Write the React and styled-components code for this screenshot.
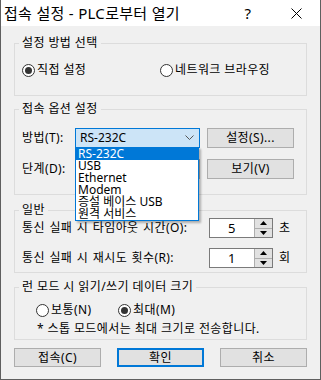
import React from "react";
import styled, { createGlobalStyle, css } from "styled-components";

const GlobalStyle = createGlobalStyle`
  html, body { margin: 0; padding: 0; background: #f0f0f0; }
  body {
    font-family: "Noto Sans", "Noto Sans CJK KR", sans-serif;
    font-size: 12px;
    letter-spacing: 0.4px;
    color: #000;
  }
  * { box-sizing: border-box; }
`;

const Window = styled.div`
  width: 321px;
  height: 380px;
  background: #f0f0f0;
  border: 1px solid #5f5f5f;
  border-top: none;
  display: flex;
  flex-direction: column;
`;

const TitleBar = styled.div`
  height: 26px;
  background: #fff;
  display: flex;
  align-items: center;
  padding-left: 3px;
  flex-shrink: 0;
`;

const TitleText = styled.div`
  flex: 1;
  font-size: 15px;
  line-height: 20px;
  letter-spacing: 0.3px;
  white-space: nowrap;
`;

const CaptionButton = styled.div`
  width: 48px;
  height: 26px;
  display: flex;
  align-items: center;
  justify-content: center;
  font-size: 15px;
  color: #000;
`;

const Body = styled.div`
  padding: 9px 13px 0 13px;
  display: flex;
  flex-direction: column;
`;

const Group = styled.fieldset`
  margin: ${(p) => p.$mt || 0}px 0 0 0;
  padding: 0;
  border: 1px solid #dcdcdc;
  min-width: 0;
`;

const Legend = styled.legend`
  margin-left: 4px;
  padding: 0 3px;
  font-size: 12px;
  line-height: 16px;
  height: 16px;
`;

const Content = styled.div`
  padding: ${(p) => p.$pad};
  display: flex;
  flex-direction: column;
  gap: ${(p) => p.$gap || 0}px;
`;

const RadioRow = styled.div`
  display: grid;
  grid-template-columns: ${(p) => p.$col}px auto;
  height: 16px;
  align-items: center;
`;

const RadioLabel = styled.label`
  display: flex;
  align-items: center;
  gap: 2px;
  line-height: 16px;
  white-space: nowrap;
`;

const RadioCircle = styled.span`
  width: 13px;
  height: 13px;
  border-radius: 50%;
  border: 1px solid #333;
  background: #fff;
  display: flex;
  align-items: center;
  justify-content: center;
  flex-shrink: 0;
  &::after {
    content: "";
    width: 7px;
    height: 7px;
    border-radius: 50%;
    background: ${(p) => (p.$checked ? "#333" : "transparent")};
  }
`;

const FieldRow = styled.div`
  display: flex;
  align-items: center;
  height: 20px;
`;

const FieldLabel = styled.div`
  width: ${(p) => p.$w}px;
  line-height: 16px;
  white-space: nowrap;
  word-spacing: 1px;
  flex-shrink: 0;
`;

const ComboWrap = styled.div`
  position: relative;
  width: 125px;
  height: 20px;
  margin-right: 7px;
  flex-shrink: 0;
`;

const Combo = styled.div`
  width: 100%;
  height: 100%;
  border: 1px solid ${(p) => (p.$focused ? "#0078d7" : "#adadad")};
  background: ${(p) => (p.$focused ? "#cce4f7" : "#e1e1e1")};
  display: flex;
  align-items: center;
  justify-content: space-between;
  padding: 0 5px 0 4px;
  font-size: 12px;
  line-height: 16px;
  letter-spacing: 0;
`;

const DropList = styled.ul`
  position: absolute;
  top: 19px;
  left: 0;
  width: 124px;
  margin: 0;
  padding: 0;
  list-style: none;
  background: #fff;
  border: 1px solid #0078d7;
  box-shadow: 2px 2px 2px rgba(0, 0, 0, 0.28);
  z-index: 5;
`;

const DropItem = styled.li`
  height: 12px;
  line-height: 12px;
  padding-left: 2px;
  font-size: 12px;
  letter-spacing: 0;
  white-space: nowrap;
  ${(p) =>
    p.$selected &&
    css`
      background: #0078d7;
      color: #fff;
    `}
`;

const Button = styled.button`
  width: 87px;
  height: ${(p) => p.$h || 20}px;
  padding: 0;
  margin: 0;
  font-family: inherit;
  font-size: 12px;
  letter-spacing: 0.4px;
  line-height: 16px;
  color: #000;
  background: #e1e1e1;
  border: ${(p) => (p.$primary ? "2px solid #0078d7" : "1px solid #adadad")};
  flex-shrink: 0;
`;

const Spin = styled.div`
  width: 64px;
  height: 20px;
  border: 1px solid #7a7a7a;
  background: #fff;
  display: flex;
  flex-shrink: 0;
`;

const SpinValue = styled.div`
  flex: 1;
  text-align: center;
  font-size: 13px;
  line-height: 18px;
`;

const SpinButtons = styled.div`
  width: 18px;
  display: flex;
  flex-direction: column;
  border-left: 1px solid #adadad;
`;

const SpinButton = styled.div`
  flex: 1;
  background: #e1e1e1;
  display: flex;
  align-items: center;
  justify-content: center;
  & + & { border-top: 1px solid #adadad; }
`;

const Unit = styled.div`
  margin-left: 6px;
  line-height: 16px;
`;

const Note = styled.div`
  margin-top: 3px;
  padding-left: 1px;
  line-height: 16px;
  white-space: nowrap;
`;

const Footer = styled.div`
  margin-top: 8px;
  display: flex;
  justify-content: space-between;
`;

const Chevron = () => (
  <svg width="9" height="6" viewBox="0 0 9 6">
    <polyline points="0.5,0.5 4.5,4.5 8.5,0.5" fill="none" stroke="#555" strokeWidth="1" />
  </svg>
);

const Arrow = ({ up }) => (
  <svg width="7" height="4" viewBox="0 0 7 4">
    <polygon points={up ? "3.5,0 7,4 0,4" : "0,0 7,0 3.5,4"} fill="#000" />
  </svg>
);

const CloseIcon = () => (
  <svg width="11" height="11" viewBox="0 0 11 11">
    <path d="M0.5 0.5 L10.5 10.5 M10.5 0.5 L0.5 10.5" stroke="#000" strokeWidth="1" />
  </svg>
);

const Radio = ({ checked, children }) => (
  <RadioLabel>
    <RadioCircle $checked={checked} />
    {children}
  </RadioLabel>
);

const SpinBox = ({ value }) => (
  <Spin>
    <SpinValue>{value}</SpinValue>
    <SpinButtons>
      <SpinButton><Arrow up /></SpinButton>
      <SpinButton><Arrow /></SpinButton>
    </SpinButtons>
  </Spin>
);

const methods = ["RS-232C", "USB", "Ethernet", "Modem", "증설 베이스 USB", "원격 서비스"];

export default function App() {
  return (
    <>
      <GlobalStyle />
      <Window>
        <TitleBar>
          <TitleText>접속 설정 - PLC로부터 열기</TitleText>
          <CaptionButton>?</CaptionButton>
          <CaptionButton><CloseIcon /></CaptionButton>
        </TitleBar>
        <Body>
          <Group>
            <Legend>설정 방법 선택</Legend>
            <Content $pad="11px 0 17px 7px">
              <RadioRow $col={138}>
                <Radio checked>직접 설정</Radio>
                <Radio>네트워크 브라우징</Radio>
              </RadioRow>
            </Content>
          </Group>

          <Group $mt={5}>
            <Legend>접속 옵션 설정</Legend>
            <Content $pad="11px 0 15px 7px" $gap={11}>
              <FieldRow>
                <FieldLabel $w={53}>방법(T):</FieldLabel>
                <ComboWrap>
                  <Combo $focused>
                    <span>RS-232C</span>
                    <Chevron />
                  </Combo>
                  <DropList>
                    {methods.map((m, i) => (
                      <DropItem key={m} $selected={i === 0}>{m}</DropItem>
                    ))}
                  </DropList>
                </ComboWrap>
                <Button>설정(S)...</Button>
              </FieldRow>
              <FieldRow>
                <FieldLabel $w={53}>단계(D):</FieldLabel>
                <ComboWrap>
                  <Combo />
                </ComboWrap>
                <Button>보기(V)</Button>
              </FieldRow>
            </Content>
          </Group>

          <Group $mt={7}>
            <Legend>일반</Legend>
            <Content $pad="0 0 4px 7px" $gap={10}>
              <FieldRow>
                <FieldLabel $w={187}>통신 실패 시 타임아웃 시간(O):</FieldLabel>
                <SpinBox value="5" />
                <Unit>초</Unit>
              </FieldRow>
              <FieldRow>
                <FieldLabel $w={187}>통신 실패 시 재시도 횟수(R):</FieldLabel>
                <SpinBox value="1" />
                <Unit>회</Unit>
              </FieldRow>
            </Content>
          </Group>

          <Group $mt={6}>
            <Legend>런 모드 시 읽기/쓰기 데이터 크기</Legend>
            <Content $pad="7px 0 2px 21px">
              <RadioRow $col={82}>
                <Radio>보통(N)</Radio>
                <Radio checked>최대(M)</Radio>
              </RadioRow>
              <Note>* 스톱 모드에서는 최대 크기로 전송합니다.</Note>
            </Content>
          </Group>

          <Footer>
            <Button $h={19}>접속(C)</Button>
            <Button $h={19} $primary>확인</Button>
            <Button $h={19}>취소</Button>
          </Footer>
        </Body>
      </Window>
    </>
  );
}
